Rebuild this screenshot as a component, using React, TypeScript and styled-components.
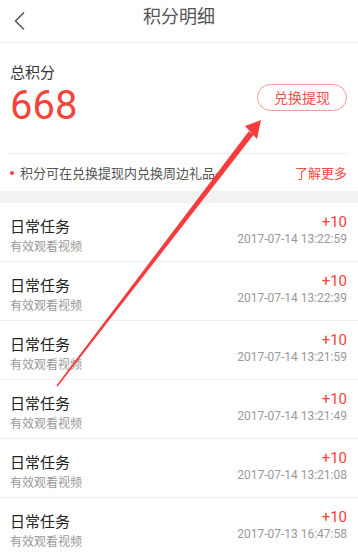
import React from "react";
import styled, { createGlobalStyle } from "styled-components";

const Global = createGlobalStyle`
  html, body { margin: 0; padding: 0; background: #fff; }
  body { font-family: Roboto, "Noto Sans CJK SC", sans-serif; -webkit-font-smoothing: antialiased; }
  * { box-sizing: border-box; }
`;

const Page = styled.div`
  position: relative;
  width: 358px;
  height: 553px;
  overflow: hidden;
  background: #fff;
`;

const Header = styled.header`
  height: 43px;
  border-bottom: 1px solid #ececec;
  display: grid;
  grid-template-columns: 40px 1fr 40px;
  align-items: center;
`;

const BackBtn = styled.div`
  display: flex;
  align-items: center;
  justify-content: flex-start;
  padding-left: 13px;
  height: 42px;
`;

const Title = styled.h1`
  margin: 0;
  text-align: center;
  font-size: 18px;
  font-weight: 400;
  color: #555;
  line-height: 34px;
  align-self: start;
`;

const Summary = styled.section`
  padding: 20px 11px 0 10px;
`;

const Label = styled.div`
  font-size: 15px;
  line-height: 20px;
  color: #333;
`;

const ScoreRow = styled.div`
  display: flex;
  justify-content: space-between;
  align-items: flex-start;
  margin-top: 1px;
`;

const Score = styled.div`
  margin-top: 2px;
  font-size: 40px;
  line-height: 40px;
  color: #f4433a;
`;

const PillButton = styled.button`
  width: 90px;
  height: 27px;
  border: 1px solid #f39a92;
  border-radius: 14px;
  background: #fff;
  color: #ee5148;
  font-family: "Noto Sans CJK SC", sans-serif;
  font-size: 14px;
  line-height: 25px;
  padding: 0;
`;

const Divider = styled.div`
  height: 1px;
  background: #eeeeee;
  margin: 27px 0 0 -2px;
`;

const InfoRow = styled.div`
  height: 37px;
  display: flex;
  align-items: center;
  justify-content: space-between;
`;

const InfoText = styled.div`
  display: flex;
  align-items: center;
  gap: 6px;
  font-size: 13px;
  color: #555;
`;

const Dot = styled.span`
  width: 4px;
  height: 4px;
  border-radius: 50%;
  background: #f4433a;
`;

const MoreLink = styled.span`
  font-size: 13px;
  color: #f04a3d;
`;

const Band = styled.div`
  height: 12px;
  background: #f2f2f2;
`;

const List = styled.ul`
  list-style: none;
  margin: 0;
  padding: 0;
`;

const Row = styled.li`
  height: 59px;
  border-bottom: 1px solid #eeeeee;
  display: flex;
  justify-content: space-between;
  align-items: flex-start;
  padding: 0 11px 0 10px;
`;

const Col = styled.div<{ $top: number; $right?: boolean }>`
  margin-top: ${(p) => p.$top}px;
  display: flex;
  flex-direction: column;
  align-items: ${(p) => (p.$right ? "flex-end" : "flex-start")};
`;

const RowTitle = styled.div`
  font-size: 15px;
  line-height: 20px;
  color: #222;
`;

const RowSub = styled.div`
  font-size: 12px;
  line-height: 18px;
  color: #999;
  margin-top: 1px;
`;

const Points = styled.div`
  font-size: 15px;
  line-height: 20px;
  color: #f4433a;
`;

const Time = styled.div`
  font-size: 12px;
  line-height: 16px;
  color: #999;
  margin-top: -1px;
`;

const Overlay = styled.svg`
  position: absolute;
  left: 0;
  top: 0;
  pointer-events: none;
`;

const rows = [
  "2017-07-14 13:22:59",
  "2017-07-14 13:22:39",
  "2017-07-14 13:21:59",
  "2017-07-14 13:21:49",
  "2017-07-14 13:21:08",
  "2017-07-13 16:47:58",
];

export default function App() {
  return (
    <Page>
      <Global />
      <Header>
        <BackBtn>
          <svg width="12" height="20" viewBox="0 0 12 20">
            <path d="M11 1.5 L2.5 10 L11 18.5" fill="none" stroke="#555a66" strokeWidth="1.6" />
          </svg>
        </BackBtn>
        <Title>积分明细</Title>
        <div />
      </Header>
      <Summary>
        <Label>总积分</Label>
        <ScoreRow>
          <Score>668</Score>
          <PillButton>兑换提现</PillButton>
        </ScoreRow>
        <Divider />
        <InfoRow>
          <InfoText>
            <Dot />
            积分可在兑换提现内兑换周边礼品~
          </InfoText>
          <MoreLink>了解更多</MoreLink>
        </InfoRow>
      </Summary>
      <Band />
      <List>
        {rows.map((t) => (
          <Row key={t}>
            <Col $top={14}>
              <RowTitle>日常任务</RowTitle>
              <RowSub>有效观看视频</RowSub>
            </Col>
            <Col $top={9} $right>
              <Points>+10</Points>
              <Time>{t}</Time>
            </Col>
          </Row>
        ))}
      </List>
      <Overlay width="358" height="553" viewBox="0 0 358 553">
        <polygon points="56.4,385.6 57.6,386.4 253.6,134.8 248.8,131.2" fill="#f53b3b" />
        <polygon points="261,120 245,126 257,139" fill="#f53b3b" />
      </Overlay>
    </Page>
  );
}
